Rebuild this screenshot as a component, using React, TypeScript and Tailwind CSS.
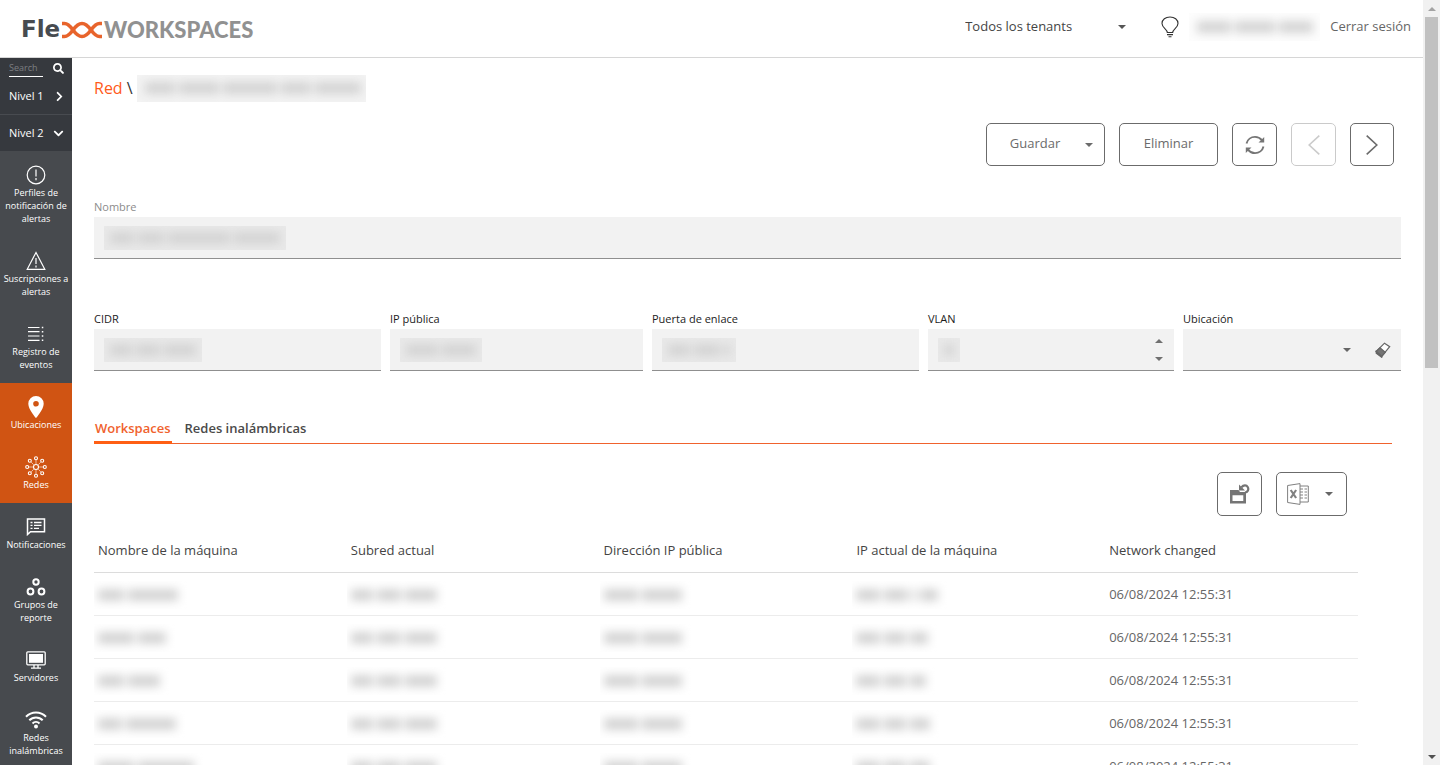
import { useState } from "react";
import type { ReactNode } from "react";
import { FaChevronDown, FaChevronRight, FaSearch } from "react-icons/fa";

type MenuItem = { label: string; icon: ReactNode; active?: boolean };

const MENU: MenuItem[] = [
  { label: "Perfiles de notificación de alertas", icon: <AlertCircleIcon /> },
  { label: "Suscripciones a alertas", icon: <WarningIcon /> },
  { label: "Registro de eventos", icon: <LogIcon /> },
  { label: "Ubicaciones", icon: <PinIcon />, active: true },
  { label: "Redes", icon: <NetworkIcon />, active: true },
  { label: "Notificaciones", icon: <NotesIcon /> },
  { label: "Grupos de reporte", icon: <GroupsIcon /> },
  { label: "Servidores", icon: <ServerIcon /> },
  { label: "Redes inalámbricas", icon: <WifiIcon /> },
];

const COLUMNS = [
  "Nombre de la máquina",
  "Subred actual",
  "Dirección IP pública",
  "IP actual de la máquina",
  "Network changed",
];

// widths of the masked words in each cell
const ROWS: { cells: number[][]; changed: string }[] = [
  { cells: [[26, 50], [22, 24, 32], [34, 40], [24, 24, 4, 18]], changed: "06/08/2024 12:55:31" },
  { cells: [[36, 28], [22, 24, 32], [34, 40], [24, 22, 18]], changed: "06/08/2024 12:55:31" },
  { cells: [[26, 32], [22, 24, 32], [34, 40], [24, 22, 16]], changed: "06/08/2024 12:55:31" },
  { cells: [[24, 50], [22, 24, 32], [34, 40], [24, 22, 20]], changed: "06/08/2024 12:55:31" },
  { cells: [[36, 56], [22, 24, 32], [34, 40], [24, 22, 20]], changed: "06/08/2024 12:55:31" },
];

const TABS = ["Workspaces", "Redes inalámbricas"];

function Masked({ words, className = "" }: { words: number[]; className?: string }) {
  return (
    <span aria-hidden="true" className={`flex items-center overflow-hidden ${className}`}>
      <span className="flex gap-1 blur-[5px]">
        {words.map((width, i) => (
          <span key={i} className="h-3 bg-[#d4d4d4]" style={{ width }} />
        ))}
      </span>
    </span>
  );
}

function Caret({ className = "" }: { className?: string }) {
  return (
    <svg viewBox="0 0 8 4" className={`h-1 w-2 shrink-0 ${className}`} fill="currentColor" aria-hidden="true">
      <path d="M0 0h8L4 4z" />
    </svg>
  );
}

function AlertCircleIcon() {
  return (
    <svg width="20" height="20" viewBox="0 0 20 20" fill="none" stroke="white" strokeWidth="1.2">
      <circle cx="10" cy="10" r="8.8" />
      <path d="M10 4.500v7M10 13v2.200" />
    </svg>
  );
}

function WarningIcon() {
  return (
    <svg width="20" height="20" viewBox="0 0 20 20" fill="none" stroke="white" strokeWidth="1.2">
      <path d="M10 1.5 18.800 18.300H1.200z" />
      <path d="M10 7v6M10 14.500v2" />
    </svg>
  );
}

function LogIcon() {
  return (
    <svg width="18" height="16" viewBox="0 0 18 16" fill="none" stroke="white" strokeWidth="1.2">
      <path d="M1 1.500h11.500M1 5.700h11.500M1 10h11.500M1 14.300h11.500" />
      <path d="M14.800 1.500h1.500M14.800 5.700h1.500M14.800 10h1.500M14.800 14.300h1.500" strokeWidth="1.400" />
    </svg>
  );
}

function PinIcon() {
  return (
    <svg width="16" height="22" viewBox="0 0 16 22" fill="white" fillRule="evenodd">
      <path d="M8 0a7.700 7.700 0 0 0-7.700 7.700C.3 13.500 8 22 8 22s7.700-8.500 7.700-14.300A7.700 7.700 0 0 0 8 0zm0 10.500a2.800 2.800 0 1 1 0-5.600 2.800 2.800 0 0 1 0 5.600z" />
    </svg>
  );
}

function NetworkIcon() {
  return (
    <svg width="22" height="22" viewBox="0 0 22 22" fill="none" stroke="white" strokeWidth="1.100">
      <circle cx="11" cy="11" r="2.500" />
      <circle cx="11" cy="2.200" r="1.500" />
      <circle cx="11" cy="19.800" r="1.500" />
      <circle cx="2.200" cy="11" r="1.500" />
      <circle cx="19.800" cy="11" r="1.500" />
      <circle cx="4.800" cy="4.800" r="1.500" />
      <circle cx="17.200" cy="4.800" r="1.500" />
      <circle cx="4.800" cy="17.200" r="1.500" />
      <circle cx="17.200" cy="17.200" r="1.500" />
      <path
        d="M11 4v4M11 14v4M4 11h4M14 11h4M6.200 6.200l2.500 2.500M15.800 6.200l-2.500 2.500M6.200 15.800l2.500-2.500M15.800 15.800l-2.500-2.500"
        strokeWidth=".6"
      />
    </svg>
  );
}

function NotesIcon() {
  return (
    <svg width="20" height="18" viewBox="0 0 20 18" fill="none" stroke="white" strokeWidth="1.500">
      <path d="M1.500 1h17v12.700H4.500l-3 2.800z" />
      <path d="M4.500 4.500h2M8 4.500h7.500M4.500 7.400h2M8 7.400h7.500M4.500 10.300h2M8 10.300h5" strokeWidth="1.300" />
    </svg>
  );
}

function GroupsIcon() {
  return (
    <svg width="20" height="18" viewBox="0 0 20 18" fill="none" stroke="white" strokeWidth="2">
      <circle cx="10" cy="4" r="2.700" />
      <circle cx="4.500" cy="13.500" r="2.900" />
      <circle cx="15.500" cy="13.500" r="2.900" />
    </svg>
  );
}

function ServerIcon() {
  return (
    <svg width="20" height="18" viewBox="0 0 20 18" fill="none" stroke="white">
      <rect x=".8" y=".8" width="18.400" height="13" rx="1" strokeWidth="1.300" />
      <rect x="3" y="3" width="14" height="8.800" fill="white" stroke="none" />
      <path d="M8 14v3M12 14v3M5 17.200h10" strokeWidth="1.300" />
    </svg>
  );
}

function WifiIcon() {
  return (
    <svg width="22" height="18" viewBox="0 0 22 18" fill="none" stroke="white" strokeWidth="2">
      <path d="M1 5.800C6.500.2 15.500.2 21 5.800M4.300 9.300c3.700-3.800 9.700-3.800 13.400 0M7.500 12.500c2-2 5-2 7 0" />
      <circle cx="11" cy="15.600" r="2" fill="white" stroke="none" />
    </svg>
  );
}

function BulbIcon() {
  return (
    <svg width="18" height="22" viewBox="0 0 18 22" fill="none" stroke="#333" strokeWidth="1.100">
      <path d="M6.300 16.500c0-3.500-5.300-4.600-5.300-9C1 3.600 4.500 1 9 1s8 2.600 8 6.500c0 4.400-5.300 5.500-5.300 9z" />
      <path d="M6 18.600h6M7.500 20.800h3" />
    </svg>
  );
}

function RefreshIcon() {
  return (
    <svg width="20" height="20" viewBox="0 0 20 20" fill="none" stroke="#757575" strokeWidth="1.900">
      <path d="M1.500 8.500C2.500 4.500 6 1.900 10 1.900c2.900 0 5.200 1.200 6.900 3.300M18.500 11.500c-1 4-4.500 6.600-8.500 6.600-2.900 0-5.200-1.200-6.900-3.300" />
      <path d="M19.200 2v5.500h-5.700zM.8 18v-5.500h5.700z" fill="#757575" stroke="none" />
    </svg>
  );
}

function AngleIcon({ direction }: { direction: "left" | "right" }) {
  return (
    <svg width="12" height="20" viewBox="0 0 12 20" fill="none" stroke="currentColor" strokeWidth="1.600">
      <path d={direction === "left" ? "M11.300.7 1.200 10l10.100 9.300" : "M.7.7 10.800 10 .7 19.300"} />
    </svg>
  );
}

function EraserIcon() {
  return (
    <svg width="16" height="16" viewBox="0 0 16 16" fill="none" stroke="#666" strokeWidth="1.200">
      <path d="M1.200 9.500 9.500 1.200l5.200 3.500-8 9.800z" fill="white" />
      <path d="M1.200 9.500 5 5.700l5.300 4.500-3.600 4.300z" fill="#757575" />
      <path d="M1.200 9.500v1.800l5.500 4v-1z" fill="#757575" />
    </svg>
  );
}

function ResetViewIcon() {
  return (
    <svg width="20" height="20" viewBox="0 0 20 20" fill="none" stroke="#757575">
      <path d="M0 6h8.500l1.500 2h6v11.500H0zM2.500 11.300V17h10.800v-5.700z" fill="#757575" stroke="none" fillRule="evenodd" />
      <path d="M11.500 3.300c2-2.400 5-2.400 6.200-.3 1.500 2.600-.2 5.200-2.700 5.500" strokeWidth="2.200" />
      <path d="M9 .5v6h6z" fill="#757575" stroke="none" />
    </svg>
  );
}

function ExcelIcon() {
  return (
    <svg width="22" height="22" viewBox="0 0 22 22" fill="none" stroke="#808080">
      <path d="M13 3h8.300v16H13" />
      <path d="M13 6h3M17.500 6h2.500M13 9h3M17.500 9h2.500M13 12h3M17.500 12h2.500M13 15h3M17.500 15h2.500" />
      <path d="M.6 2.500 13 .6v20.800L.6 19.500z" fill="white" />
      <path d="m3.700 7 5.400 8M9.100 7l-5.400 8" strokeWidth="2.200" />
    </svg>
  );
}

function Logo() {
  return (
    <a href="#" aria-label="Flexx Workspaces" className="flex items-center pt-1">
      <span className="w-10 font-['DejaVu_Sans',sans-serif] text-[23px] leading-8 font-bold text-[#474b50]">Fle</span>
      <svg width="42" height="18" viewBox="0 0 42 18" fill="none" stroke="#e8642c" strokeWidth="3.600" className="mt-0.5" aria-hidden="true">
        <path d="M1 2.500h2.500c3.500 0 6 3 8.500 6.500s5 6.500 9 6.500 6.500-3 9-6.500 5-6.500 8.500-6.500H41" />
        <path d="M1 15.500h2.500c3.500 0 6-3 8.500-6.500s5-6.500 9-6.500 6.500 3 9 6.500 5 6.500 8.500 6.500H41" />
      </svg>
      <span className="pt-0.5 pl-px font-[Lato,sans-serif] text-[22px] leading-8 font-black text-[#919191]">WORKSPACES</span>
    </a>
  );
}

function TopBar() {
  return (
    <header className="flex h-[58px] shrink-0 items-center justify-between border-b border-[#d6d6d6] pr-3 pb-1 pl-[21px]">
      <Logo />
      <div className="flex items-center text-[13px] text-[#666]">
        <div className="relative mr-5 flex items-center">
          <select aria-label="Tenant" className="w-44 appearance-none bg-transparent text-[#444] outline-none">
            <option>Todos los tenants</option>
          </select>
          <Caret className="pointer-events-none absolute right-[15px] text-[#555]" />
        </div>
        <button type="button" aria-label="Ayuda">
          <BulbIcon />
        </button>
        <Masked words={[34, 40, 34]} className="mx-2.5 h-7 w-[131px] bg-[#fdfdfd] pl-2" />
        <a href="#">Cerrar sesión</a>
      </div>
    </header>
  );
}

function Sidebar() {
  return (
    <nav className="flex w-[72px] shrink-0 flex-col overflow-hidden bg-[#474a4e] text-white">
      <div className="shrink-0 bg-[#36393e] text-[11px] font-medium">
        <div className="flex h-5 items-center justify-between pr-2 pl-[9px]">
          <input
            aria-label="Search"
            placeholder="Search"
            className="h-[18px] w-[34px] border-b border-white bg-transparent text-[9px] outline-none placeholder:text-[#7d7f82]"
          />
          <FaSearch size={11} />
        </div>
        <button type="button" className="flex h-[37px] w-full items-center justify-between border-b border-[#484b50] pr-[7px] pl-[9px]">
          Nivel 1
          <FaChevronRight size={11} />
        </button>
        <button type="button" className="flex h-9 w-full items-center justify-between pr-2 pl-[9px]">
          Nivel 2
          <FaChevronDown size={11} />
        </button>
      </div>
      {MENU.map(item => (
        <a
          key={item.label}
          href="#"
          className={`flex shrink-0 flex-col items-center pt-3 pb-3 text-center text-[9px] leading-[13px] ${item.active ? "bg-[#d05413]" : ""}`}
        >
          <span className="flex h-[23px] items-center">{item.icon}</span>
          {item.label}
        </a>
      ))}
    </nav>
  );
}

function Field({ id, label, words, className = "text-[#1c1c1c]", children }: {
  id: string;
  label: string;
  words?: number[];
  className?: string;
  children?: ReactNode;
}) {
  return (
    <div className="min-w-0">
      <label htmlFor={id} className={`block text-[11px] leading-5 font-medium ${className}`}>{label}</label>
      <div className="relative flex h-[42px] items-center border-b border-[#8f8f8f] bg-[#f2f2f2]">
        {children ?? <input id={id} className="h-full w-full bg-transparent px-3 text-[13px] outline-none" />}
        {words ? <Masked words={words} className="pointer-events-none absolute left-2.5 h-6 bg-[#e9e9e9] px-1.5" /> : null}
      </div>
    </div>
  );
}

function Toolbar() {
  const button = "flex h-[43px] items-center justify-center rounded-[5px] border border-[#6b6b6b]";

  return (
    <div className="flex justify-end gap-3.5 pr-[7px] text-[13px] text-[#6b6b6b]">
      <button type="button" className={`${button} w-[119px] gap-[25px] pl-3`}>
        <span className="pb-0.5">Guardar</span>
        <Caret />
      </button>
      <button type="button" className={`${button} w-[99px] pb-0.5`}>Eliminar</button>
      <button type="button" aria-label="Actualizar" className={`${button} w-[45px]`}>
        <RefreshIcon />
      </button>
      <button type="button" disabled aria-label="Anterior" className={`${button} w-[45px] opacity-35`}>
        <AngleIcon direction="left" />
      </button>
      <button type="button" aria-label="Siguiente" className={`${button} w-11`}>
        <AngleIcon direction="right" />
      </button>
    </div>
  );
}

function WorkspacesTable() {
  return (
    <div className="pr-[43px]">
      <div className="flex justify-end gap-3.5 pt-7 pr-[11px] text-[#666]">
        <button type="button" aria-label="Restablecer vista" className="flex h-11 w-[45px] items-center justify-center rounded-[5px] border border-[#6b6b6b]">
          <ResetViewIcon />
        </button>
        <button type="button" aria-label="Exportar a Excel" className="flex h-11 w-[71px] items-center justify-center gap-4 rounded-[5px] border border-[#6b6b6b] pr-1">
          <ExcelIcon />
          <Caret />
        </button>
      </div>
      <table className="mt-3 w-full table-fixed text-left text-[13px]">
        <thead>
          <tr className="h-11 border-b border-[#dcdcdc] text-[#444]">
            {COLUMNS.map(column => (
              <th key={column} className="pt-0.5 pl-1 font-normal">{column}</th>
            ))}
          </tr>
        </thead>
        <tbody className="text-[#666]">
          {ROWS.map((row, i) => (
            <tr key={i} className="h-[43px] border-b border-[#ececec]">
              {row.cells.map((words, j) => (
                <td key={j} className="pt-0.5">
                  <Masked words={words} className="h-7 pl-1" />
                </td>
              ))}
              <td className="pt-0.5 pl-1">{row.changed}</td>
            </tr>
          ))}
        </tbody>
      </table>
    </div>
  );
}

function ScrollRail() {
  return (
    <div aria-hidden="true" className="flex w-[17px] shrink-0 flex-col items-center bg-[#f1f1f1]">
      <span className="flex h-[17px] items-center">
        <Caret className="rotate-180 text-[#a3a3a3]" />
      </span>
      <div className="w-full grow px-0.5">
        <div className="h-[48%] bg-[#c1c1c1]" />
      </div>
      <span className="flex h-[17px] items-center">
        <Caret className="text-[#505050]" />
      </span>
    </div>
  );
}

export default function App() {
  const [tab, setTab] = useState(TABS[0]);

  return (
    <div className="flex h-screen overflow-hidden bg-white font-['Open_Sans',sans-serif] text-[#333]">
      <div className="flex min-w-0 grow flex-col">
        <TopBar />
        <div className="flex min-h-0 grow">
          <Sidebar />
          <main className="min-w-0 grow overflow-hidden px-[22px] pt-4">
            <div className="flex h-7 items-center gap-1 text-base">
              <a href="#" className="text-[#ff5a1a]">Red</a>
              <span>\</span>
              <Masked words={[30, 40, 54, 30, 46]} className="h-[27px] w-[229px] bg-[#f3f3f3] pl-2" />
            </div>

            <div className="mt-[21px]">
              <Toolbar />
            </div>

            <div className="mt-[31px]">
              <Field id="nombre" label="Nombre" words={[24, 26, 62, 46]} className="text-[#8c8c8c]" />
            </div>

            <div className="mt-[50px] grid grid-cols-[287fr_253fr_267fr_246fr_218fr] gap-[9px]">
              <Field id="cidr" label="CIDR" words={[22, 24, 32]} />
              <Field id="ip" label="IP pública" words={[32, 34]} />
              <Field id="gateway" label="Puerta de enlace" words={[22, 26, 6]} />
              <Field id="vlan" label="VLAN" words={[10]}>
                <input id="vlan" className="h-full w-full min-w-0 bg-transparent px-3 text-[13px] outline-none" />
                <div className="flex flex-col gap-0.5 pr-[11px] text-[#707070]">
                  <button type="button" aria-label="Incrementar" className="flex h-4 items-center">
                    <Caret className="rotate-180" />
                  </button>
                  <button type="button" aria-label="Reducir" className="flex h-4 items-center">
                    <Caret />
                  </button>
                </div>
              </Field>
              <Field id="ubicacion" label="Ubicación">
                <select id="ubicacion" className="h-full w-full min-w-0 appearance-none bg-transparent px-3 text-[13px] outline-none">
                  <option value="" />
                </select>
                <Caret className="text-[#666]" />
                <button type="button" aria-label="Borrar ubicación" className="mr-2.5 ml-6 shrink-0">
                  <EraserIcon />
                </button>
              </Field>
            </div>

            <div role="tablist" className="mt-[41px] mr-[9px] flex gap-3 border-b border-[#f0622d] text-[13px]">
              {TABS.map(name => (
                <button
                  key={name}
                  type="button"
                  role="tab"
                  aria-selected={tab === name}
                  onClick={() => setTab(name)}
                  className={`-mb-px h-8 border-b-3 px-px pt-1 font-semibold ${
                    tab === name ? "border-[#ff5f14] text-[#f0622d]" : "border-transparent text-[#4a4a4a]"
                  }`}
                >
                  {name}
                </button>
              ))}
            </div>

            <WorkspacesTable />
          </main>
        </div>
      </div>
      <ScrollRail />
    </div>
  );
}
